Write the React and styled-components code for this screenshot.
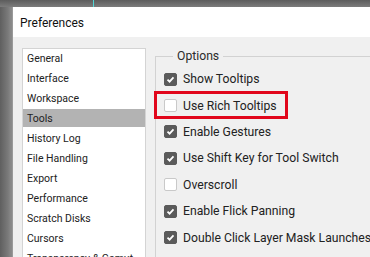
import React from "react";
import styled, { createGlobalStyle } from "styled-components";

const GlobalStyle = createGlobalStyle`
  html, body {
    margin: 0;
    padding: 0;
    background: #6f6f6f;
  }
  * {
    box-sizing: border-box;
  }
`;

// whole captured area: gray workspace behind the dialog
const Screen = styled.div`
  width: 370px;
  height: 257px;
  overflow: hidden;
  display: flex;
  flex-direction: column;
  background: linear-gradient(90deg, #5f5f5f 0px, #7a7a7a 8px, #8a8a8a 11px);
  font-family: Roboto, "Liberation Sans", sans-serif;
  color: #2b2b2b;
`;

const TopStrip = styled.div`
  height: 7px;
  flex-shrink: 0;
  background:
    linear-gradient(90deg, transparent 93px, #4fd6d6 93px, #4fd6d6 94px, transparent 94px),
    linear-gradient(180deg, #5c5c5c, #7c7c7c);
`;

const Dialog = styled.div`
  flex: 1;
  margin-left: 12px;
  display: flex;
  flex-direction: column;
  background: #f0f0f0;
  border-left: 1px solid #9a9a9a;
`;

const TitleBar = styled.div`
  height: 30px;
  flex-shrink: 0;
  display: flex;
  align-items: center;
  padding-left: 7px;
  padding-top: 1px;
  background: #fff;
  font-size: 12px;
  color: #111;
`;

const Body = styled.div`
  flex: 1;
  display: flex;
  gap: 9px;
  padding: 11px 0 0 9px;
  min-height: 0;
`;

const SideList = styled.div`
  width: 124px;
  flex-shrink: 0;
  background: #fff;
  border: 1px solid #d4d4d4;
  border-bottom: none;
  display: flex;
  flex-direction: column;
  gap: 2px;
`;

const SideItem = styled.div`
  height: 18px;
  flex-shrink: 0;
  display: flex;
  align-items: center;
  padding-left: 4px;
  font-size: 10.5px;
  color: #222;
  white-space: nowrap;
  background: ${(props) => (props.selected ? "#b3b3b3" : "transparent")};
`;

const Group = styled.fieldset`
  flex: 1;
  margin: 1px 0 0 0;
  padding: 3px 0 0 8px;
  border: 1px solid #d2d2d2;
  border-right: none;
  border-bottom: none;
  min-width: 0;
`;

const Legend = styled.legend`
  margin-left: 9px;
  padding: 0 4px;
  font-size: 12.2px;
  color: #2b2b2b;
`;

const OptionRow = styled.div`
  position: relative;
  height: 26.4px;
  display: flex;
  align-items: center;
  gap: 6px;
  font-size: 12.2px;
  white-space: nowrap;
  color: #222;
`;

const Box = styled.span`
  width: 13px;
  height: 13px;
  flex-shrink: 0;
  border-radius: 2px;
  display: flex;
  align-items: center;
  justify-content: center;
  background: ${(props) => (props.checked ? "#5b5b5b" : "#fff")};
  border: 1px solid ${(props) => (props.checked ? "#5b5b5b" : "#c9c9c9")};
`;

// red annotation drawn over the row
const Highlight = styled.div`
  position: absolute;
  left: -10px;
  top: -1px;
  width: 134px;
  height: 28px;
  border: 3px solid #e1061b;
  pointer-events: none;
`;

const sideItems = [
  "General",
  "Interface",
  "Workspace",
  "Tools",
  "History Log",
  "File Handling",
  "Export",
  "Performance",
  "Scratch Disks",
  "Cursors",
  "Transparency & Gamut",
];

const options = [
  { label: "Show Tooltips", checked: true },
  { label: "Use Rich Tooltips", checked: false, marked: true },
  { label: "Enable Gestures", checked: true },
  { label: "Use Shift Key for Tool Switch", checked: true },
  { label: "Overscroll", checked: false },
  { label: "Enable Flick Panning", checked: true },
  { label: "Double Click Layer Mask Launches Select and Mask", checked: true },
  { label: "Vary Round Brush Hardness based on HUD vertical movement", checked: false },
];

function CheckBox({ checked }) {
  return (
    <Box checked={checked}>
      {checked && (
        <svg width="9" height="9" viewBox="0 0 9 9">
          <polyline points="1.5,4.6 3.6,6.6 7.5,2.4" fill="none" stroke="#fff" strokeWidth="1.8" />
        </svg>
      )}
    </Box>
  );
}

export default function App() {
  return (
    <>
      <GlobalStyle />
      <Screen>
        <TopStrip />
        <Dialog>
          <TitleBar>Preferences</TitleBar>
          <Body>
            <SideList>
              {sideItems.map((name) => (
                <SideItem key={name} selected={name === "Tools"}>
                  {name}
                </SideItem>
              ))}
            </SideList>
            <Group>
              <Legend>Options</Legend>
              {options.map((opt) => (
                <OptionRow key={opt.label}>
                  <CheckBox checked={opt.checked} />
                  {opt.label}
                  {opt.marked && <Highlight />}
                </OptionRow>
              ))}
            </Group>
          </Body>
        </Dialog>
      </Screen>
    </>
  );
}
